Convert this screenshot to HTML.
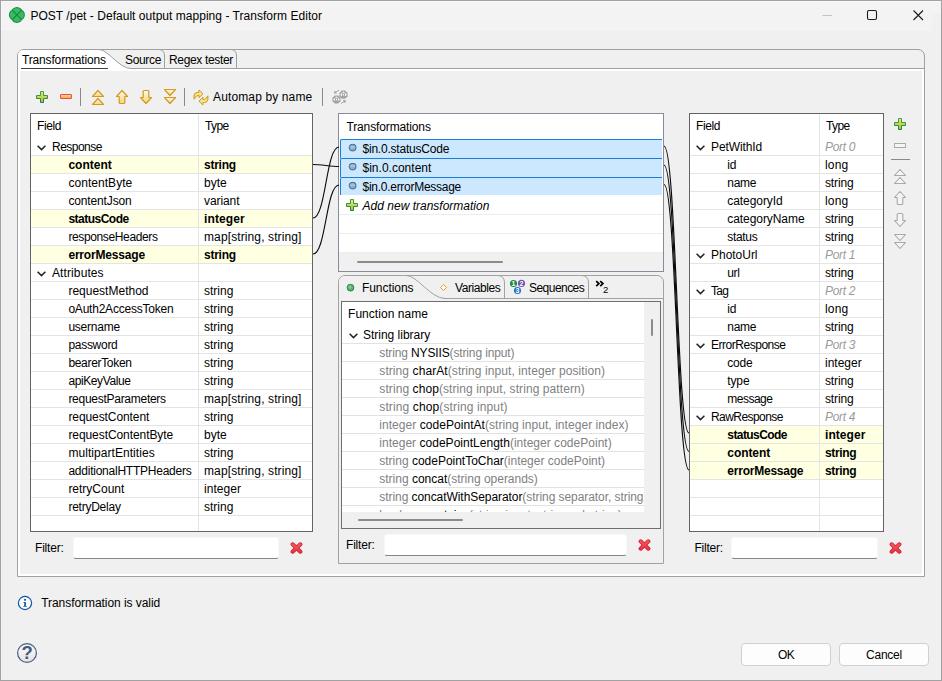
<!DOCTYPE html>
<html lang="en"><head><meta charset="utf-8"><title>POST /pet - Default output mapping - Transform Editor</title>
<style>
html,body{margin:0;padding:0}
body{width:942px;height:681px;overflow:hidden;background:#f0f0f0;font-family:"Liberation Sans",sans-serif;font-size:12px;color:#000}
#w{position:relative;width:942px;height:681px;overflow:hidden;background:#f0f0f0}
#w div,#w span.t,#w svg{position:absolute}
#w span.t{white-space:nowrap;line-height:14px;font-size:12px}
.b{font-weight:bold}.i{font-style:italic}
.g{color:#7f7f7f}

.tbl{background:#fff;border:1px solid #646464;box-sizing:border-box;overflow:hidden}
.hl{background:#e4e4e4;height:1px}
.vl{background:#e4e4e4;width:1px}
.y{background:#ffffe1}
.sel{background:#cce8ff;border-top:1px solid #1c7cdc;border-left:1px solid #1c7cdc;border-radius:2px 0 0 0;box-sizing:border-box}
.inp{background:#fff;border:1px solid #f8f8f8;border-bottom:1px solid #868686;border-radius:3px;box-sizing:border-box}
.btn{background:#fdfdfd;border:1px solid #d0d0d0;border-radius:4px;box-sizing:border-box}

</style></head><body><div id="w">
<div style="left:0px;top:0px;width:942px;height:681px;background:#f0f0f0;border:1px solid #a2a2a2;box-sizing:border-box"></div>
<div style="left:1px;top:1px;width:940px;height:30px;background:#f3f3f3;border-top:1px solid #f9f9f9;border-left:1px solid #f9f9f9;box-sizing:border-box"></div>
<svg style="left:8px;top:6px;" width="18" height="18" viewBox="0 0 18 18"><circle cx="8.9" cy="6.6" r="5.7" fill="#15933a"/><circle cx="8.9" cy="11.2" r="5.7" fill="#15933a"/><circle cx="6.6" cy="8.9" r="5.7" fill="#15933a"/><circle cx="11.2" cy="8.9" r="5.7" fill="#15933a"/><circle cx="8.9" cy="6.6" r="4.7" fill="#3cb869"/><circle cx="8.9" cy="11.2" r="4.7" fill="#3cb869"/><circle cx="6.6" cy="8.9" r="4.7" fill="#3cb869"/><circle cx="11.2" cy="8.9" r="4.7" fill="#3cb869"/><path d="M4.1 4.1L13.7 13.7M13.7 4.1L4.1 13.7" stroke="#12903a" stroke-width="1.3" fill="none"/></svg>
<span class="t" style="left:30.4px;top:9px;letter-spacing:0.032px;">POST /pet - Default output mapping - Transform Editor</span>
<svg style="left:816px;top:4px;" width="24" height="24" viewBox="0 0 24 24"><path d="M6.5 11.5H16" stroke="#c4c4c4" stroke-width="1" fill="none"/></svg>
<svg style="left:860px;top:4px;" width="24" height="24" viewBox="0 0 24 24"><rect x="7.5" y="6.5" width="9" height="9" rx="1.5" fill="none" stroke="#1a1a1a" stroke-width="1.1"/></svg>
<svg style="left:906px;top:4px;" width="24" height="24" viewBox="0 0 24 24"><path d="M7.5 6.5L17 16M17 6.5L7.5 16" stroke="#1a1a1a" stroke-width="1.1" fill="none"/></svg>
<div style="left:17px;top:49px;width:908px;height:528px;border:1px solid #a0a0a0;border-radius:7px 7px 0 0;box-sizing:border-box;background:#f0f0f0"></div>
<div style="left:18px;top:69px;width:906px;height:507px;background:#fff"></div>
<div style="left:20px;top:71px;width:902px;height:503px;background:#f0f0f0"></div>
<div style="left:18px;top:68px;width:906px;height:1px;background:#a0a0a0"></div>
<svg style="left:18px;top:49px;" width="120" height="21" viewBox="0 0 120 21"><path d="M0 21V7Q0 1 6 1H81C90 0.5 101 19.5 113 19.5H120V21Z" fill="#fff"/><path d="M81 0.5C90 0.5 101 19.5 113 19.5H120" fill="none" stroke="#a0a0a0" stroke-width="1"/></svg>
<div style="left:21px;top:68px;width:87px;height:1px;background:#404040"></div>
<span class="t" style="left:22px;top:53px;letter-spacing:-0.157px;">Transformations</span>
<span class="t" style="left:125px;top:53px;letter-spacing:-0.336px;">Source</span>
<span class="t" style="left:169px;top:53px;letter-spacing:-0.335px;">Regex tester</span>
<svg style="left:158px;top:49px;" width="8" height="20" viewBox="0 0 8 20"><path d="M0.5 0.5Q6.5 0.5 6.5 7V20" fill="none" stroke="#a0a0a0"/></svg>
<svg style="left:230px;top:49px;" width="8" height="20" viewBox="0 0 8 20"><path d="M0.5 0.5Q6.5 0.5 6.5 7V20" fill="none" stroke="#a0a0a0"/></svg>
<svg width="0" height="0" style="left:0;top:0"><defs><linearGradient id="gp" x1="0" y1="0" x2="0" y2="1"><stop offset="0" stop-color="#ecec5c"/><stop offset="0.5" stop-color="#c4d854"/><stop offset="1" stop-color="#9cc050"/></linearGradient><linearGradient id="gps" x1="0" y1="0" x2="0" y2="1"><stop offset="0" stop-color="#44a04c"/><stop offset="1" stop-color="#2a7a40"/></linearGradient><linearGradient id="gm" x1="0" y1="0" x2="0" y2="1"><stop offset="0" stop-color="#f8e468"/><stop offset="1" stop-color="#f8a048"/></linearGradient><linearGradient id="gy2" x1="0" y1="0" x2="0" y2="1"><stop offset="0" stop-color="#fff4c0"/><stop offset="1" stop-color="#f6cc4c"/></linearGradient><linearGradient id="gh" x1="0" y1="0" x2="0" y2="1"><stop offset="0" stop-color="#f6f6f6"/><stop offset="0.5" stop-color="#f0f0f0"/><stop offset="1" stop-color="#e2e2e2"/></linearGradient><linearGradient id="gr" gradientUnits="userSpaceOnUse" x1="0" y1="0" x2="0" y2="12"><stop offset="0" stop-color="#f4606c"/><stop offset="1" stop-color="#e42c3c"/></linearGradient><linearGradient id="gy" x1="0" y1="0" x2="0" y2="1"><stop offset="0" stop-color="#fffae6"/><stop offset="1" stop-color="#f9d676"/></linearGradient></defs></svg>
<svg style="left:36px;top:91px;" width="12" height="12" viewBox="0 0 12 12"><path d="M4.5 0.5h3v4h4v3h-4v4h-3v-4h-4v-3h4z" fill="url(#gp)" stroke="url(#gps)" stroke-width="1"/></svg>
<svg style="left:60px;top:94px;" width="12" height="5" viewBox="0 0 12 5"><rect x="0.5" y="0.5" width="11" height="4" rx="0.3" fill="url(#gm)" stroke="#f2456a" stroke-width="1"/></svg>
<div style="left:80px;top:88px;width:1px;height:18px;background:#8a8a8a"></div>
<svg style="left:91px;top:89px;" width="14" height="17" viewBox="0 0 14 17"><path d="M7 1.5L12.5 7.5H1.5Z" fill="url(#gy)" stroke="#d29a24" stroke-width="1.2" stroke-linejoin="round"/><path d="M7 9.5L12.5 15.5H1.5Z" fill="url(#gy)" stroke="#d29a24" stroke-width="1.2" stroke-linejoin="round"/></svg>
<svg style="left:115px;top:89px;" width="14" height="16" viewBox="0 0 14 16"><path d="M7 1.5L12.5 7.5H9.8V13.5Q9.8 14.5 8.8 14.5H5.2Q4.2 14.5 4.2 13.5V7.5H1.5Z" fill="url(#gy)" stroke="#d29a24" stroke-width="1.2" stroke-linejoin="round"/></svg>
<svg style="left:139px;top:89px;" width="14" height="16" viewBox="0 0 14 16"><path d="M7 14.5L12.5 8.5H9.8V2.5Q9.8 1.5 8.8 1.5H5.2Q4.2 1.5 4.2 2.5V8.5H1.5Z" fill="url(#gy)" stroke="#d29a24" stroke-width="1.2" stroke-linejoin="round"/></svg>
<svg style="left:163px;top:88px;" width="14" height="17" viewBox="0 0 14 17"><path d="M7 7.5L12.5 1.5H1.5Z" fill="url(#gy)" stroke="#d29a24" stroke-width="1.2" stroke-linejoin="round"/><path d="M7 15.5L12.5 9.5H1.5Z" fill="url(#gy)" stroke="#d29a24" stroke-width="1.2" stroke-linejoin="round"/></svg>
<div style="left:184px;top:88px;width:1px;height:18px;background:#8a8a8a"></div>
<svg style="left:193px;top:89px;" width="16" height="17" viewBox="0 0 16 17"><path d="M1 10.2L1 6.5Q1.4 3.6 4.2 3.5L6 3.5L6 1L10 4.8L6 8.6L6 6.6L4.6 6.6Q3.6 6.7 3 7.8Z" fill="url(#gy2)" stroke="#c99a1c" stroke-width="1" stroke-linejoin="round"/><g transform="rotate(180 7.95 8.5)"><path d="M1 10.2L1 6.5Q1.4 3.6 4.2 3.5L6 3.5L6 1L10 4.8L6 8.6L6 6.6L4.6 6.6Q3.6 6.7 3 7.8Z" fill="url(#gy2)" stroke="#c99a1c" stroke-width="1" stroke-linejoin="round"/></g></svg>
<span class="t" style="left:213px;top:90px;letter-spacing:0.129px;">Automap by name</span>
<div style="left:322px;top:88px;width:1px;height:18px;background:#8a8a8a"></div>
<svg style="left:332px;top:89px;" width="17" height="16" viewBox="0 0 17 16"><g transform="translate(11.5,5.6)"><polygon points="4.07,1.68 1.68,4.07 -1.68,4.07 -4.07,1.68 -4.07,-1.68 -1.68,-4.07 1.68,-4.07 4.07,-1.68" fill="#a3a3a3"/><path d="M-3.3 0L-0.2 -3.1H0.2L3.3 0L2.3 1.3H-2.3Z" fill="#f5f5f5"/><rect x="-1" y="-1.3" width="2" height="2.6" fill="#fdfdfd" stroke="#a3a3a3" stroke-width="0.9"/></g><g transform="translate(4.5,10.5)"><polygon points="4.07,1.68 1.68,4.07 -1.68,4.07 -4.07,1.68 -4.07,-1.68 -1.68,-4.07 1.68,-4.07 4.07,-1.68" fill="#a3a3a3"/><path d="M-3.3 0L-0.2 -3.1H0.2L3.3 0L2.3 1.3H-2.3Z" fill="#f5f5f5"/><rect x="-1" y="-1.3" width="2" height="2.6" fill="#fdfdfd" stroke="#a3a3a3" stroke-width="0.9"/></g><path d="M2 2.2h2.6v2.4h-2.6z M11.2 11h2.6v2.4h-2.6z" fill="#a8a8a8"/><path d="M4.4 2.6L7 1.2M11.4 13L9 14.6" stroke="#a8a8a8" stroke-width="1" fill="none"/></svg>
<div class="tbl" style="left:30px;top:113px;width:283px;height:419px;"></div>
<span class="t" style="left:37px;top:119px;letter-spacing:-0.403px;">Field</span>
<span class="t" style="left:205px;top:119px;letter-spacing:-0.579px;">Type</span>
<div class="y" style="left:31px;top:156px;width:281px;height:17px;"></div>
<div class="y" style="left:31px;top:210px;width:281px;height:17px;"></div>
<div class="y" style="left:31px;top:246px;width:281px;height:17px;"></div>
<div class="hl" style="left:31px;top:155px;width:281px;height:1px;"></div>
<div class="hl" style="left:31px;top:173px;width:281px;height:1px;"></div>
<div class="hl" style="left:31px;top:191px;width:281px;height:1px;"></div>
<div class="hl" style="left:31px;top:209px;width:281px;height:1px;"></div>
<div class="hl" style="left:31px;top:227px;width:281px;height:1px;"></div>
<div class="hl" style="left:31px;top:245px;width:281px;height:1px;"></div>
<div class="hl" style="left:31px;top:263px;width:281px;height:1px;"></div>
<div class="hl" style="left:31px;top:281px;width:281px;height:1px;"></div>
<div class="hl" style="left:31px;top:299px;width:281px;height:1px;"></div>
<div class="hl" style="left:31px;top:317px;width:281px;height:1px;"></div>
<div class="hl" style="left:31px;top:335px;width:281px;height:1px;"></div>
<div class="hl" style="left:31px;top:353px;width:281px;height:1px;"></div>
<div class="hl" style="left:31px;top:371px;width:281px;height:1px;"></div>
<div class="hl" style="left:31px;top:389px;width:281px;height:1px;"></div>
<div class="hl" style="left:31px;top:407px;width:281px;height:1px;"></div>
<div class="hl" style="left:31px;top:425px;width:281px;height:1px;"></div>
<div class="hl" style="left:31px;top:443px;width:281px;height:1px;"></div>
<div class="hl" style="left:31px;top:461px;width:281px;height:1px;"></div>
<div class="hl" style="left:31px;top:479px;width:281px;height:1px;"></div>
<div class="hl" style="left:31px;top:497px;width:281px;height:1px;"></div>
<div class="hl" style="left:31px;top:515px;width:281px;height:1px;"></div>
<div class="vl" style="left:198px;top:114px;width:1px;height:417px;"></div>
<svg style="left:37px;top:145px;" width="9" height="6" viewBox="0 0 9 6"><path d="M0.6 0.7L4.5 4.6L8.4 0.7" fill="none" stroke="#222" stroke-width="1.5"/></svg>
<span class="t" style="left:52px;top:140px;letter-spacing:-0.516px;">Response</span>
<span class="t b" style="left:68.4px;top:158px;">content</span>
<span class="t b" style="left:204px;top:158px;letter-spacing:-0.255px;">string</span>
<span class="t" style="left:68.4px;top:176px;letter-spacing:0.051px;">contentByte</span>
<span class="t" style="left:204px;top:176px;letter-spacing:0.007px;">byte</span>
<span class="t" style="left:68.4px;top:194px;letter-spacing:-0.135px;">contentJson</span>
<span class="t" style="left:204px;top:194px;letter-spacing:-0.088px;">variant</span>
<span class="t b" style="left:68.4px;top:212px;letter-spacing:-0.504px;">statusCode</span>
<span class="t b" style="left:204px;top:212px;letter-spacing:0.114px;">integer</span>
<span class="t" style="left:68.4px;top:230px;letter-spacing:-0.368px;">responseHeaders</span>
<span class="t" style="left:204px;top:230px;letter-spacing:0.113px;">map[string, string]</span>
<span class="t b" style="left:68.4px;top:248px;letter-spacing:-0.184px;">errorMessage</span>
<span class="t b" style="left:204px;top:248px;letter-spacing:-0.255px;">string</span>
<svg style="left:37px;top:271px;" width="9" height="6" viewBox="0 0 9 6"><path d="M0.6 0.7L4.5 4.6L8.4 0.7" fill="none" stroke="#222" stroke-width="1.5"/></svg>
<span class="t" style="left:52px;top:266px;letter-spacing:0.103px;">Attributes</span>
<span class="t" style="left:68.4px;top:284px;letter-spacing:0.005px;">requestMethod</span>
<span class="t" style="left:204px;top:284px;letter-spacing:-0.007px;">string</span>
<span class="t" style="left:68.4px;top:302px;letter-spacing:-0.218px;">oAuth2AccessToken</span>
<span class="t" style="left:204px;top:302px;letter-spacing:-0.007px;">string</span>
<span class="t" style="left:68.4px;top:320px;letter-spacing:-0.220px;">username</span>
<span class="t" style="left:204px;top:320px;letter-spacing:-0.007px;">string</span>
<span class="t" style="left:68.4px;top:338px;letter-spacing:-0.282px;">password</span>
<span class="t" style="left:204px;top:338px;letter-spacing:-0.007px;">string</span>
<span class="t" style="left:68.4px;top:356px;letter-spacing:-0.318px;">bearerToken</span>
<span class="t" style="left:204px;top:356px;letter-spacing:-0.007px;">string</span>
<span class="t" style="left:68.4px;top:374px;letter-spacing:-0.399px;">apiKeyValue</span>
<span class="t" style="left:204px;top:374px;letter-spacing:-0.007px;">string</span>
<span class="t" style="left:68.4px;top:392px;letter-spacing:-0.272px;">requestParameters</span>
<span class="t" style="left:204px;top:392px;letter-spacing:0.113px;">map[string, string]</span>
<span class="t" style="left:68.4px;top:410px;letter-spacing:-0.081px;">requestContent</span>
<span class="t" style="left:204px;top:410px;letter-spacing:-0.007px;">string</span>
<span class="t" style="left:68.4px;top:428px;letter-spacing:-0.074px;">requestContentByte</span>
<span class="t" style="left:204px;top:428px;letter-spacing:0.007px;">byte</span>
<span class="t" style="left:68.4px;top:446px;letter-spacing:0.055px;">multipartEntities</span>
<span class="t" style="left:204px;top:446px;letter-spacing:-0.007px;">string</span>
<span class="t" style="left:68.4px;top:464px;letter-spacing:-0.236px;">additionalHTTPHeaders</span>
<span class="t" style="left:204px;top:464px;letter-spacing:0.113px;">map[string, string]</span>
<span class="t" style="left:68.4px;top:482px;letter-spacing:-0.012px;">retryCount</span>
<span class="t" style="left:204px;top:482px;letter-spacing:0.030px;">integer</span>
<span class="t" style="left:68.4px;top:500px;letter-spacing:-0.239px;">retryDelay</span>
<span class="t" style="left:204px;top:500px;letter-spacing:-0.007px;">string</span>
<span class="t" style="left:35px;top:541px;letter-spacing:-0.200px;">Filter:</span>
<div class="inp" style="left:73px;top:537px;width:206px;height:22px;"></div>
<svg style="left:290px;top:542px;" width="13" height="12" viewBox="0 0 13 12"><path d="M2.6 2.3L10.4 9.7M10.4 2.3L2.6 9.7" fill="none" stroke="#d8202f" stroke-width="4" stroke-linecap="round"/><path d="M2.7 2.4L10.3 9.6M10.3 2.4L2.7 9.6" fill="none" stroke="url(#gr)" stroke-width="2.4" stroke-linecap="round"/></svg>
<div class="tbl" style="left:689px;top:113px;width:195px;height:419px;"></div>
<span class="t" style="left:696px;top:119px;letter-spacing:-0.403px;">Field</span>
<span class="t" style="left:826px;top:119px;letter-spacing:-0.579px;">Type</span>
<div class="y" style="left:690px;top:426px;width:193px;height:17px;"></div>
<div class="y" style="left:690px;top:444px;width:193px;height:17px;"></div>
<div class="y" style="left:690px;top:462px;width:193px;height:17px;"></div>
<div class="hl" style="left:690px;top:155px;width:193px;height:1px;"></div>
<div class="hl" style="left:690px;top:173px;width:193px;height:1px;"></div>
<div class="hl" style="left:690px;top:191px;width:193px;height:1px;"></div>
<div class="hl" style="left:690px;top:209px;width:193px;height:1px;"></div>
<div class="hl" style="left:690px;top:227px;width:193px;height:1px;"></div>
<div class="hl" style="left:690px;top:245px;width:193px;height:1px;"></div>
<div class="hl" style="left:690px;top:263px;width:193px;height:1px;"></div>
<div class="hl" style="left:690px;top:281px;width:193px;height:1px;"></div>
<div class="hl" style="left:690px;top:299px;width:193px;height:1px;"></div>
<div class="hl" style="left:690px;top:317px;width:193px;height:1px;"></div>
<div class="hl" style="left:690px;top:335px;width:193px;height:1px;"></div>
<div class="hl" style="left:690px;top:353px;width:193px;height:1px;"></div>
<div class="hl" style="left:690px;top:371px;width:193px;height:1px;"></div>
<div class="hl" style="left:690px;top:389px;width:193px;height:1px;"></div>
<div class="hl" style="left:690px;top:407px;width:193px;height:1px;"></div>
<div class="hl" style="left:690px;top:425px;width:193px;height:1px;"></div>
<div class="hl" style="left:690px;top:443px;width:193px;height:1px;"></div>
<div class="hl" style="left:690px;top:461px;width:193px;height:1px;"></div>
<div class="hl" style="left:690px;top:479px;width:193px;height:1px;"></div>
<div class="hl" style="left:690px;top:497px;width:193px;height:1px;"></div>
<div class="hl" style="left:690px;top:515px;width:193px;height:1px;"></div>
<div class="vl" style="left:819px;top:114px;width:1px;height:417px;"></div>
<svg style="left:696px;top:145px;" width="9" height="6" viewBox="0 0 9 6"><path d="M0.6 0.7L4.5 4.6L8.4 0.7" fill="none" stroke="#222" stroke-width="1.5"/></svg>
<span class="t" style="left:711px;top:140px;letter-spacing:-0.100px;">PetWithId</span>
<span class="t i" style="left:825px;top:140px;letter-spacing:-0.333px;color:#9a9a9a;">Port 0</span>
<span class="t" style="left:727.3px;top:158px;letter-spacing:-0.272px;">id</span>
<span class="t" style="left:825px;top:158px;letter-spacing:0.203px;">long</span>
<span class="t" style="left:727.3px;top:176px;letter-spacing:-0.279px;">name</span>
<span class="t" style="left:825px;top:176px;letter-spacing:-0.141px;">string</span>
<span class="t" style="left:727.3px;top:194px;letter-spacing:-0.072px;">categoryId</span>
<span class="t" style="left:825px;top:194px;letter-spacing:0.203px;">long</span>
<span class="t" style="left:727.3px;top:212px;letter-spacing:-0.069px;">categoryName</span>
<span class="t" style="left:825px;top:212px;letter-spacing:-0.141px;">string</span>
<span class="t" style="left:727.3px;top:230px;letter-spacing:-0.333px;">status</span>
<span class="t" style="left:825px;top:230px;letter-spacing:-0.141px;">string</span>
<svg style="left:696px;top:253px;" width="9" height="6" viewBox="0 0 9 6"><path d="M0.6 0.7L4.5 4.6L8.4 0.7" fill="none" stroke="#222" stroke-width="1.5"/></svg>
<span class="t" style="left:711px;top:248px;letter-spacing:-0.023px;">PhotoUrl</span>
<span class="t i" style="left:825px;top:248px;letter-spacing:-0.333px;color:#9a9a9a;">Port 1</span>
<span class="t" style="left:727.3px;top:266px;letter-spacing:-0.348px;">url</span>
<span class="t" style="left:825px;top:266px;letter-spacing:-0.141px;">string</span>
<svg style="left:696px;top:289px;" width="9" height="6" viewBox="0 0 9 6"><path d="M0.6 0.7L4.5 4.6L8.4 0.7" fill="none" stroke="#222" stroke-width="1.5"/></svg>
<span class="t" style="left:711px;top:284px;letter-spacing:-0.681px;">Tag</span>
<span class="t i" style="left:825px;top:284px;letter-spacing:-0.333px;color:#9a9a9a;">Port 2</span>
<span class="t" style="left:727.3px;top:302px;letter-spacing:-0.272px;">id</span>
<span class="t" style="left:825px;top:302px;letter-spacing:0.203px;">long</span>
<span class="t" style="left:727.3px;top:320px;letter-spacing:-0.279px;">name</span>
<span class="t" style="left:825px;top:320px;letter-spacing:-0.141px;">string</span>
<svg style="left:696px;top:343px;" width="9" height="6" viewBox="0 0 9 6"><path d="M0.6 0.7L4.5 4.6L8.4 0.7" fill="none" stroke="#222" stroke-width="1.5"/></svg>
<span class="t" style="left:711px;top:338px;letter-spacing:-0.477px;">ErrorResponse</span>
<span class="t i" style="left:825px;top:338px;letter-spacing:-0.333px;color:#9a9a9a;">Port 3</span>
<span class="t" style="left:727.3px;top:356px;letter-spacing:-0.204px;">code</span>
<span class="t" style="left:825px;top:356px;">integer</span>
<span class="t" style="left:727.3px;top:374px;letter-spacing:-0.143px;">type</span>
<span class="t" style="left:825px;top:374px;letter-spacing:-0.141px;">string</span>
<span class="t" style="left:727.3px;top:392px;letter-spacing:-0.512px;">message</span>
<span class="t" style="left:825px;top:392px;letter-spacing:-0.141px;">string</span>
<svg style="left:696px;top:415px;" width="9" height="6" viewBox="0 0 9 6"><path d="M0.6 0.7L4.5 4.6L8.4 0.7" fill="none" stroke="#222" stroke-width="1.5"/></svg>
<span class="t" style="left:711px;top:410px;letter-spacing:-0.568px;">RawResponse</span>
<span class="t i" style="left:825px;top:410px;letter-spacing:-0.333px;color:#9a9a9a;">Port 4</span>
<span class="t b" style="left:727.3px;top:428px;letter-spacing:-0.574px;">statusCode</span>
<span class="t b" style="left:825px;top:428px;letter-spacing:0.071px;">integer</span>
<span class="t b" style="left:727.3px;top:446px;letter-spacing:-0.075px;">content</span>
<span class="t b" style="left:825px;top:446px;letter-spacing:-0.338px;">string</span>
<span class="t b" style="left:727.3px;top:464px;letter-spacing:-0.225px;">errorMessage</span>
<span class="t b" style="left:825px;top:464px;letter-spacing:-0.338px;">string</span>
<span class="t" style="left:694.4px;top:541px;letter-spacing:-0.200px;">Filter:</span>
<div class="inp" style="left:731px;top:537px;width:147px;height:22px;"></div>
<svg style="left:889px;top:542px;" width="13" height="12" viewBox="0 0 13 12"><path d="M2.6 2.3L10.4 9.7M10.4 2.3L2.6 9.7" fill="none" stroke="#d8202f" stroke-width="4" stroke-linecap="round"/><path d="M2.7 2.4L10.3 9.6M10.3 2.4L2.7 9.6" fill="none" stroke="url(#gr)" stroke-width="2.4" stroke-linecap="round"/></svg>
<div class="tbl" style="left:338px;top:113px;width:326px;height:159px;border-color:#868c98"></div>
<span class="t" style="left:346.4px;top:120px;letter-spacing:-0.123px;">Transformations</span>
<div class="hl" style="left:339px;top:214px;width:324px;height:1px;background:#ececec"></div>
<div class="hl" style="left:339px;top:233px;width:324px;height:1px;background:#ececec"></div>
<div class="hl" style="left:339px;top:252px;width:324px;height:1px;background:#ececec"></div>
<div style="left:339px;top:253px;width:324px;height:18px;background:#f0f0f0"></div>
<div style="left:357px;top:261px;width:146px;height:2px;background:#8b8b8b;border-radius:1px"></div>
<div class="sel" style="left:340px;top:139px;width:322px;height:19px;"></div>
<svg style="left:348px;top:143px;" width="10" height="10" viewBox="0 0 10 10"><circle cx="4.6" cy="4.6" r="4.5" fill="#e8f3fc"/><circle cx="4.6" cy="4.6" r="3.4" fill="#86aed2" stroke="#456c96" stroke-width="1.1"/><path d="M2.2 4.2H7" stroke="#a8c8e2" stroke-width="1.6"/></svg>
<span class="t" style="left:362.5px;top:142px;letter-spacing:-0.214px;">$in.0.statusCode</span>
<div class="sel" style="left:340px;top:158px;width:322px;height:19px;"></div>
<svg style="left:348px;top:162px;" width="10" height="10" viewBox="0 0 10 10"><circle cx="4.6" cy="4.6" r="4.5" fill="#e8f3fc"/><circle cx="4.6" cy="4.6" r="3.4" fill="#86aed2" stroke="#456c96" stroke-width="1.1"/><path d="M2.2 4.2H7" stroke="#a8c8e2" stroke-width="1.6"/></svg>
<span class="t" style="left:362.5px;top:161px;letter-spacing:0.009px;">$in.0.content</span>
<div class="sel" style="left:340px;top:177px;width:322px;height:18px;"></div>
<svg style="left:348px;top:181px;" width="10" height="10" viewBox="0 0 10 10"><circle cx="4.6" cy="4.6" r="4.5" fill="#e8f3fc"/><circle cx="4.6" cy="4.6" r="3.4" fill="#86aed2" stroke="#456c96" stroke-width="1.1"/><path d="M2.2 4.2H7" stroke="#a8c8e2" stroke-width="1.6"/></svg>
<span class="t" style="left:362.5px;top:180px;letter-spacing:-0.271px;">$in.0.errorMessage</span>
<svg style="left:346px;top:199px;" width="12" height="12" viewBox="0 0 12 12"><path d="M4.5 0.5h3v4h4v3h-4v4h-3v-4h-4v-3h4z" fill="url(#gp)" stroke="url(#gps)" stroke-width="1"/></svg>
<span class="t i" style="left:362.6px;top:199px;">Add new transformation</span>
<svg style="left:300px;top:100px;" width="400" height="400" viewBox="0 0 400 400"><g fill="none" stroke="#0c0c0c" stroke-width="1.15" transform="translate(-300,-100)"><path d="M313 164.5C322 164.5 330 166.5 339 166.5"/><path d="M313 218C326 218 326 147 339 147"/><path d="M313 254C326 254 326 185 339 185"/><path d="M664 146C676 146 677 433 689 433"/><path d="M664 165C676 165 677 451.5 689 451.5"/><path d="M664 184.5C676 184.5 677 470 689 470"/></g></svg>
<div style="left:338px;top:275px;width:326px;height:289px;border:1px solid #a2a2a2;border-radius:7px 7px 0 0;box-sizing:border-box;background:#f0f0f0"></div>
<div style="left:339px;top:298px;width:324px;height:1px;background:#a2a2a2"></div>
<svg style="left:339px;top:275px;" width="110" height="25" viewBox="0 0 110 25"><path d="M0 25V8Q0 1 6 1H67.5C78 0.5 92 23.5 106 23.5H110V25Z" fill="#f0f0f0"/><path d="M67.5 0.5C78 0.5 92 23.5 106 23.5H110" fill="none" stroke="#a2a2a2" stroke-width="1"/></svg>
<svg style="left:346px;top:283px;" width="10" height="10" viewBox="0 0 10 10"><circle cx="4.5" cy="4.7" r="3.4" fill="#5cb06c" stroke="#2e8a48" stroke-width="1"/><circle cx="4" cy="4" r="1.5" fill="#8ccc98"/></svg>
<span class="t" style="left:362px;top:281px;letter-spacing:-0.068px;">Functions</span>
<svg style="left:439px;top:283px;" width="10" height="10" viewBox="0 0 10 10"><path d="M4.5 1.5L7.5 4.5L4.5 7.5L1.5 4.5Z" fill="#fffbe8" stroke="#dfa02c" stroke-width="1"/></svg>
<span class="t" style="left:455px;top:281px;letter-spacing:-0.416px;">Variables</span>
<svg style="left:497px;top:275px;" width="8" height="24" viewBox="0 0 8 24"><path d="M0.5 0.5Q7.5 0.5 7.5 8V24" fill="none" stroke="#a2a2a2"/></svg>
<svg style="left:509px;top:279px;" width="18" height="16" viewBox="0 0 18 16"><circle cx="4.5" cy="4.5" r="3.55" fill="#228a3e"/><text x="4.5" y="7.0" font-size="7" font-weight="bold" fill="#fff" text-anchor="middle" font-family="Liberation Sans,sans-serif">1</text><circle cx="12.5" cy="4.4" r="3.55" fill="#6c52ac"/><text x="12.5" y="6.9" font-size="7" font-weight="bold" fill="#fff" text-anchor="middle" font-family="Liberation Sans,sans-serif">2</text><circle cx="8.5" cy="11.5" r="3.55" fill="#2076cc"/><text x="8.5" y="14.0" font-size="7" font-weight="bold" fill="#fff" text-anchor="middle" font-family="Liberation Sans,sans-serif">3</text></svg>
<span class="t" style="left:529px;top:281px;letter-spacing:-0.537px;">Sequences</span>
<svg style="left:581px;top:275px;" width="8" height="24" viewBox="0 0 8 24"><path d="M0.5 0.5Q7.5 0.5 7.5 8V24" fill="none" stroke="#a2a2a2"/></svg>
<svg style="left:595px;top:280px;" width="10" height="8" viewBox="0 0 10 8"><path d="M1.2 1.1L3.9 3.6L1.2 6.1M5.2 1.1L7.9 3.6L5.2 6.1" fill="none" stroke="#000" stroke-width="1.7"/></svg>
<span class="t" style="left:603px;top:283.3px;font-size:9.5px;">2</span>
<div class="tbl" style="left:341px;top:301px;width:320px;height:228px;border-color:#6e6e6e"></div>
<span class="t" style="left:348px;top:307px;letter-spacing:0.049px;">Function name</span>
<svg style="left:349px;top:333px;" width="9" height="6" viewBox="0 0 9 6"><path d="M0.6 0.7L4.5 4.6L8.4 0.7" fill="none" stroke="#222" stroke-width="1.5"/></svg>
<span class="t" style="left:363px;top:328px;letter-spacing:-0.011px;">String library</span>
<div style="left:342px;top:302px;width:302px;height:210px;overflow:hidden">
<span class="t" style="left:37.30000000000001px;top:44px;letter-spacing:-0.137px;"><span class="g">string </span>NYSIIS<span class="g">(string input)</span></span>
<span class="t" style="left:37.30000000000001px;top:62px;letter-spacing:0.081px;"><span class="g">string </span>charAt<span class="g">(string input, integer position)</span></span>
<span class="t" style="left:37.30000000000001px;top:80px;letter-spacing:0.084px;"><span class="g">string </span>chop<span class="g">(string input, string pattern)</span></span>
<span class="t" style="left:37.30000000000001px;top:98px;letter-spacing:0.121px;"><span class="g">string </span>chop<span class="g">(string input)</span></span>
<span class="t" style="left:37.30000000000001px;top:116px;letter-spacing:0.051px;"><span class="g">integer </span>codePointAt<span class="g">(string input, integer index)</span></span>
<span class="t" style="left:37.30000000000001px;top:134px;letter-spacing:0.021px;"><span class="g">integer </span>codePointLength<span class="g">(integer codePoint)</span></span>
<span class="t" style="left:37.30000000000001px;top:152px;letter-spacing:-0.010px;"><span class="g">string </span>codePointToChar<span class="g">(integer codePoint)</span></span>
<span class="t" style="left:37.30000000000001px;top:170px;letter-spacing:-0.007px;"><span class="g">string </span>concat<span class="g">(string operands)</span></span>
<span class="t" style="left:37.30000000000001px;top:188px;letter-spacing:-0.065px;"><span class="g">string </span>concatWithSeparator<span class="g">(string separator, string delimiter)</span></span>
<span class="t" style="left:37.30000000000001px;top:206px;letter-spacing:-0.064px;"><span class="g">boolean </span>contains<span class="g">(string input, string substring)</span></span>
</div>
<div class="hl" style="left:342px;top:343px;width:302px;height:1px;background:#e2e2e2"></div>
<div class="hl" style="left:342px;top:361px;width:302px;height:1px;background:#e2e2e2"></div>
<div class="hl" style="left:342px;top:379px;width:302px;height:1px;background:#e2e2e2"></div>
<div class="hl" style="left:342px;top:397px;width:302px;height:1px;background:#e2e2e2"></div>
<div class="hl" style="left:342px;top:415px;width:302px;height:1px;background:#e2e2e2"></div>
<div class="hl" style="left:342px;top:433px;width:302px;height:1px;background:#e2e2e2"></div>
<div class="hl" style="left:342px;top:451px;width:302px;height:1px;background:#e2e2e2"></div>
<div class="hl" style="left:342px;top:469px;width:302px;height:1px;background:#e2e2e2"></div>
<div class="hl" style="left:342px;top:487px;width:302px;height:1px;background:#e2e2e2"></div>
<div class="hl" style="left:342px;top:505px;width:302px;height:1px;background:#e2e2e2"></div>
<div style="left:644px;top:302px;width:16px;height:226px;background:#f0f0f0"></div>
<div style="left:651px;top:319px;width:2px;height:17px;background:#8b8b8b;border-radius:1px"></div>
<div style="left:342px;top:512px;width:302px;height:16px;background:#f0f0f0"></div>
<div style="left:358px;top:519px;width:105px;height:2px;background:#8b8b8b;border-radius:1px"></div>
<span class="t" style="left:346px;top:538px;letter-spacing:-0.200px;">Filter:</span>
<div class="inp" style="left:384px;top:534px;width:243px;height:22px;"></div>
<svg style="left:638px;top:539px;" width="13" height="12" viewBox="0 0 13 12"><path d="M2.6 2.3L10.4 9.7M10.4 2.3L2.6 9.7" fill="none" stroke="#d8202f" stroke-width="4" stroke-linecap="round"/><path d="M2.7 2.4L10.3 9.6M10.3 2.4L2.7 9.6" fill="none" stroke="url(#gr)" stroke-width="2.4" stroke-linecap="round"/></svg>
<svg style="left:894px;top:118px;" width="12" height="12" viewBox="0 0 12 12"><path d="M4.5 0.5h3v4h4v3h-4v4h-3v-4h-4v-3h4z" fill="url(#gp)" stroke="url(#gps)" stroke-width="1"/></svg>
<svg style="left:894px;top:143px;" width="12" height="5" viewBox="0 0 12 5"><rect x="0.5" y="0.5" width="11" height="4" fill="#f6f6f6" stroke="#a9a9a9" stroke-width="1"/></svg>
<div style="left:891px;top:159px;width:19px;height:1px;background:#8a8a8a"></div>
<svg style="left:893px;top:168px;" width="14" height="17" viewBox="0 0 14 17"><path d="M7 1.5L12.5 7.5H1.5Z M7 9.5L12.5 15.5H1.5Z" fill="#f5f5f5" stroke="#a9a9a9" stroke-width="1.1" stroke-linejoin="round"/></svg>
<svg style="left:893px;top:190px;" width="14" height="16" viewBox="0 0 14 16"><path d="M7 1.5L12.5 7.5H9.8V13.5Q9.8 14.5 8.8 14.5H5.2Q4.2 14.5 4.2 13.5V7.5H1.5Z" fill="#f5f5f5" stroke="#a9a9a9" stroke-width="1.1" stroke-linejoin="round"/></svg>
<svg style="left:893px;top:212px;" width="14" height="16" viewBox="0 0 14 16"><path d="M7 14.5L12.5 8.5H9.8V2.5Q9.8 1.5 8.8 1.5H5.2Q4.2 1.5 4.2 2.5V8.5H1.5Z" fill="#f5f5f5" stroke="#a9a9a9" stroke-width="1.1" stroke-linejoin="round"/></svg>
<svg style="left:893px;top:233px;" width="14" height="17" viewBox="0 0 14 17"><path d="M7 7.5L12.5 1.5H1.5Z M7 15.5L12.5 9.5H1.5Z" fill="#f5f5f5" stroke="#a9a9a9" stroke-width="1.1" stroke-linejoin="round"/></svg>
<svg style="left:17px;top:595px;" width="16" height="16" viewBox="0 0 16 16"><circle cx="8" cy="8" r="6.6" fill="#fbfdff" stroke="#12589f" stroke-width="1.2"/><circle cx="8" cy="4.8" r="1.1" fill="#12589f"/><path d="M6.4 7H8.9V11H9.8V11.8H6.3V11H7.2V7.8H6.4Z" fill="#12589f"/></svg>
<span class="t" style="left:41.2px;top:596px;letter-spacing:-0.055px;">Transformation is valid</span>
<svg style="left:16px;top:642px;" width="22" height="22" viewBox="0 0 22 22"><circle cx="11" cy="11" r="9.4" fill="url(#gh)" stroke="#4a5c84" stroke-width="1.2"/><text x="11.1" y="16.8" font-size="18.5" font-weight="bold" fill="#4a5a7a" text-anchor="middle" font-family="Liberation Sans,sans-serif">?</text></svg>
<div class="btn" style="left:741px;top:643px;width:90px;height:23px;"></div>
<div class="btn" style="left:839px;top:643px;width:90px;height:23px;"></div>
<span class="t" style="left:778px;top:648px;letter-spacing:-0.564px;">OK</span>
<span class="t" style="left:866px;top:648px;letter-spacing:-0.227px;">Cancel</span>
<div style="left:932px;top:14px;width:9px;height:17px;background:#f0f0f0"></div>
</div></body></html>
